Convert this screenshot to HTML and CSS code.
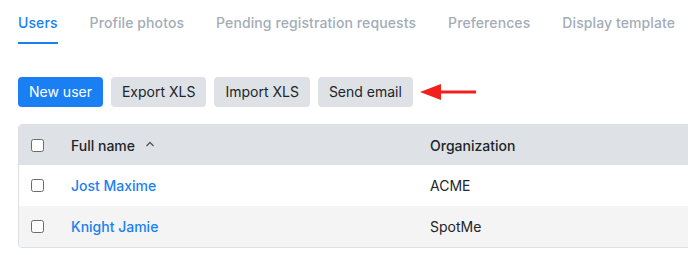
FILE: index.html
```html
<!DOCTYPE html>
<html>
<head>
<meta charset="utf-8">
<link rel="stylesheet" href="styles.css">
</head>
<body>
<div class="page">
  <nav class="tabs">
    <a class="tab active">Users</a>
    <a class="tab">Profile photos</a>
    <a class="tab">Pending registration requests</a>
    <a class="tab">Preferences</a>
    <a class="tab">Display template</a>
  </nav>
  <div class="actions">
    <button class="btn btn-primary">New user</button>
    <button class="btn">Export XLS</button>
    <button class="btn">Import XLS</button>
    <button class="btn">Send email</button>
    <svg class="arrow" width="58" height="20" viewBox="0 0 58 20">
      <polygon points="0,10 21,2 21,18" fill="#f2201c"/>
      <rect x="18" y="8.5" width="38" height="3" fill="#f2201c"/>
    </svg>
  </div>
  <div class="table">
    <div class="row head">
      <div class="cell check"><span class="box"></span></div>
      <div class="cell name">Full name
        <svg class="sort" width="10" height="6" viewBox="0 0 10 6"><polyline points="1.5,5 5,1.5 8.5,5" fill="none" stroke="#555" stroke-width="1.3"/></svg>
      </div>
      <div class="cell org">Organization</div>
    </div>
    <div class="row">
      <div class="cell check"><span class="box"></span></div>
      <div class="cell name"><a class="link">Jost Maxime</a></div>
      <div class="cell org">ACME</div>
    </div>
    <div class="row alt">
      <div class="cell check"><span class="box"></span></div>
      <div class="cell name"><a class="link">Knight Jamie</a></div>
      <div class="cell org">SpotMe</div>
    </div>
  </div>
</div>
</body>
</html>
```

FILE: styles.css
```css
html, body {
  margin: 0;
  padding: 0;
  background: #fff;
  overflow: hidden;
}
body {
  font-family: Inter, "Liberation Sans", sans-serif;
  font-size: 14px;
  color: #212529;
}
.page {
  padding: 13px 0 0 18px;
}
.tabs {
  display: flex;
  gap: 32px;
}
.tab {
  font-weight: 500;
  line-height: 20px;
  letter-spacing: 0.1px;
  color: #a3adb7;
  padding-bottom: 9px;
  border-bottom: 2px solid transparent;
  white-space: nowrap;
}
.tab.active {
  color: #1a7ff2;
  border-bottom-color: #1a7ff2;
}
.actions {
  display: flex;
  align-items: center;
  gap: 8px;
  margin-top: 33px;
}
.btn {
  font-family: inherit;
  font-size: 14px;
  line-height: 20px;
  padding: 5px 11px;
  border: 0;
  border-radius: 4px;
  background: #dee2e6;
  color: #212529;
  white-space: nowrap;
}
.btn-primary {
  background: #1a7ff2;
  color: #fff;
}
.arrow {
  margin-left: -1px;
}
.table {
  margin-top: 17px;
  width: 720px;
  border: 1px solid #dcdfe2;
  border-radius: 4px 0 0 4px;
  overflow: hidden;
}
.row {
  display: flex;
  align-items: center;
  height: 41px;
}
.row.head {
  height: 40px;
  background: #dee2e6;
  font-weight: 500;
}
.row.alt {
  background: #f4f4f4;
}
.cell.check {
  width: 40px;
  padding-left: 12px;
  display: flex;
  align-items: center;
}
.box {
  display: block;
  width: 11px;
  height: 11px;
  border: 1px solid #6b6b6b;
  border-radius: 2.5px;
  background: #fff;
}
.cell.name {
  width: 359px;
  display: flex;
  align-items: center;
  gap: 10px;
}
.sort {
  display: block;
  margin-top: -2px;
}
.link {
  color: #1a7ff2;
  font-weight: 500;
}
```
